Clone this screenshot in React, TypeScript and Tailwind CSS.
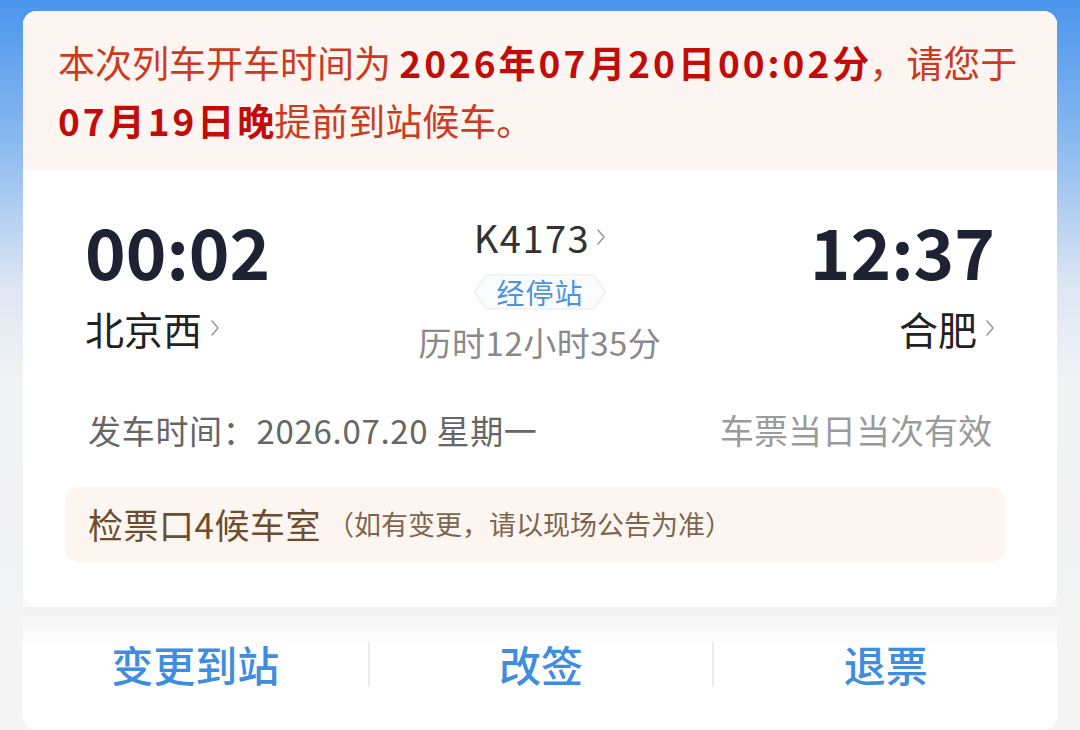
const font = { fontFamily: '"Noto Sans CJK SC", "Noto Sans", sans-serif' }

function Chevron({ className = '' }: { className?: string }) {
  return (
    <svg viewBox="0 0 10 18" className={className} fill="none">
      <polyline points="2,2 8,9 2,16" stroke="#9a9a9a" strokeWidth="1.6" strokeLinecap="round" strokeLinejoin="round" />
    </svg>
  )
}

function StopsBadge() {
  return (
    <span className="relative inline-flex h-[36px] w-[132px] items-center justify-center">
      <svg viewBox="0 0 132 36" className="absolute inset-0 h-full w-full">
        <polygon
          points="12,1 120,1 131,18 120,35 12,35 1,18"
          fill="#fbfcfe"
          stroke="#e6e9ee"
          strokeWidth="1.2"
          strokeLinejoin="round"
        />
      </svg>
      <span className="relative text-[28px] leading-none tracking-[1px] text-[#4b93e0]">经停站</span>
    </span>
  )
}

const actions = ['变更到站', '改签', '退票']

export default function App() {
  return (
    <div
      style={font}
      className="h-[730px] w-[1080px] overflow-hidden bg-[linear-gradient(180deg,#4a95ec_0px,#8fbcf0_150px,#dfe7f3_290px,#f1f2f4_380px,#f4f4f4_100%)] px-[23px] pt-[11px]"
    >
      <div className="overflow-hidden rounded-[14px] bg-white">
        {/* ticket card */}
        <div className="rounded-b-[14px] bg-white shadow-[0_4px_14px_rgba(0,0,0,0.06)]">
          <div className="bg-[#fdf5f1] px-[35px] pb-[21px] pt-[22px] text-[37px] leading-[58px] text-[#cb3c1f]">
            <div className="whitespace-nowrap">
              本次列车开车时间为{' '}
              <b className="mr-[-3px] font-bold tracking-[3px] text-[#c20c0a]">2026年07月20日00:02分</b>，请您于
            </div>
            <div className="whitespace-nowrap">
              <b className="mr-[-3px] font-bold tracking-[3px] text-[#c20c0a]">07月19日晚</b>提前到站候车。
            </div>
          </div>

          <div className="pb-[45px] pl-[42px] pr-[52px] pt-[40px]">
            <div className="flex items-start justify-between pl-[20px] pr-[10px]">
              <div className="flex flex-col items-start">
                <div className="text-[69px] font-bold leading-[80px] text-[#1e2232]">00:02</div>
                <div className="mt-[16px] flex items-center gap-[8px] text-[39px] leading-[44px] text-[#222]">
                  北京西
                  <Chevron className="h-[18px] w-[10px]" />
                </div>
              </div>

              <div className="flex flex-col items-center pt-[5px]">
                <div className="flex items-center gap-[6px] text-[38px] leading-[44px] tracking-[1.5px] text-[#333]">
                  K4173
                  <Chevron className="h-[18px] w-[10px]" />
                </div>
                <div className="mt-[15px]">
                  <StopsBadge />
                </div>
                <div className="mt-[12px] text-[33px] leading-[40px] tracking-[0.5px] text-[#8a8a8a]">历时12小时35分</div>
              </div>

              <div className="flex flex-col items-end">
                <div className="text-[69px] font-bold leading-[80px] text-[#1e2232]">12:37</div>
                <div className="mt-[16px] flex items-center gap-[8px] text-[39px] leading-[44px] text-[#222]">
                  合肥
                  <Chevron className="h-[18px] w-[10px]" />
                </div>
              </div>
            </div>

            <div className="mt-[48px] flex items-center justify-between pl-[23px] pr-[13px] leading-[40px]">
              <span className="text-[33px] tracking-[0.7px] text-[#666]">发车时间：2026.07.20 星期一</span>
              <span className="text-[34px] text-[#9b9b9b]">车票当日当次有效</span>
            </div>

            <div className="mt-[37px] flex h-[75px] items-center rounded-[14px] bg-[#fdf6f0] px-[23px]">
              <span className="text-[35px] tracking-[0.5px] text-[#6e4c2f]">检票口4候车室</span>
              <span className="ml-[6px] text-[27px] text-[#7d6650]">（如有变更，请以现场公告为准）</span>
            </div>
          </div>
        </div>

        {/* actions */}
        <div className="flex h-[123px] items-center bg-[linear-gradient(180deg,#f1f1f1_0px,#ffffff_40px)] pb-[10px]">
          {actions.map((label, i) => (
            <div key={label} className="flex flex-1 items-center">
              {i > 0 && <div className="h-[44px] w-[2px] bg-[#ececec]" />}
              <button className="flex-1 text-[42px] font-medium leading-none text-[#3f8de0]">{label}</button>
            </div>
          ))}
        </div>
      </div>
    </div>
  )
}
